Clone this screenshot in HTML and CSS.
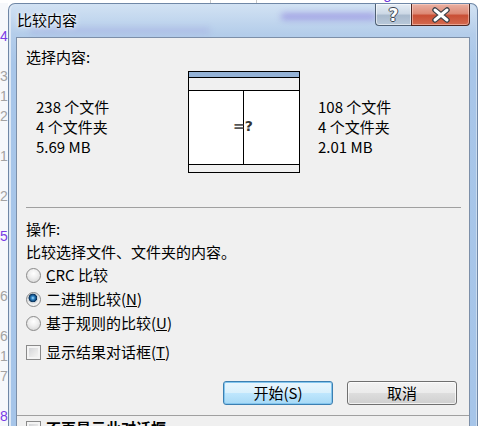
FILE: index.html
```html
<!DOCTYPE html>
<html lang="zh-CN">
<head>
    <meta charset="UTF-8">
    <title>比较内容</title>
    <link rel="stylesheet" href="styles.css">
</head>
<body>
    <div class="screen">
        <div class="topstrip">
            <span class="top-rule first"></span>
            <span class="top-rule"></span>
            <span class="top-title">■ 170027 feeling</span>
        </div>

        <div class="desk">
            <!-- editor line numbers behind the dialog -->
            <div class="gutter">
                <span class="ln mark">4</span>
                <span class="ln"></span>
                <span class="ln">3</span>
                <span class="ln">1</span>
                <span class="ln">2</span>
                <span class="ln"></span>
                <span class="ln">1</span>
                <span class="ln"></span>
                <span class="ln">2</span>
                <span class="ln"></span>
                <span class="ln mark">5</span>
                <span class="ln"></span>
                <span class="ln"></span>
                <span class="ln">6</span>
                <span class="ln"></span>
                <span class="ln">6</span>
                <span class="ln">1</span>
                <span class="ln">7</span>
                <span class="ln"></span>
                <span class="ln mark">8</span>
            </div>

            <div class="window">
                <div class="titlebar">
                    <!-- blurred stuff behind the glass -->
                    <div class="ghost ghost-one"></div>
                    <div class="ghost ghost-two"></div>
                    <span class="title">比较内容</span>
                    <div class="caption-btns">
                        <div class="cap help"><span class="help-glyph">?</span></div>
                        <div class="cap close">
                            <svg width="22" height="16" viewBox="0 0 22 16">
                                <path d="M5 3 L17 13 M17 3 L5 13" stroke="#3a3f47" stroke-width="5.5" stroke-linecap="round" fill="none"/>
                                <path d="M5 3 L17 13 M17 3 L5 13" stroke="#ffffff" stroke-width="3" stroke-linecap="round" fill="none"/>
                            </svg>
                        </div>
                    </div>
                </div>

                <div class="client">
                    <div class="label">选择内容:</div>

                    <div class="compare">
                        <div class="stats">
                            238 个文件<br>
                            4 个文件夹<br>
                            5.69 MB
                        </div>
                        <div class="diagram">
                            <div class="d-head"></div>
                            <div class="d-bar"></div>
                            <div class="d-panes">
                                <div class="pane"></div>
                                <div class="pane"></div>
                            </div>
                            <div class="d-foot"></div>
                            <span class="d-mark"><span class="eq">=</span>?</span>
                        </div>
                        <div class="stats right">
                            108 个文件<br>
                            4 个文件夹<br>
                            2.01 MB
                        </div>
                    </div>

                    <div class="sep"></div>

                    <div class="label section">操作:</div>
                    <div class="desc">比较选择文件、文件夹的内容。</div>

                    <div class="options">
                        <div class="opt"><span class="radio"></span><span><u>C</u>RC 比较</span></div>
                        <div class="opt"><span class="radio on"></span><span>二进制比较(<u>N</u>)</span></div>
                        <div class="opt"><span class="radio"></span><span>基于规则的比较(<u>U</u>)</span></div>
                        <div class="opt check-row"><span class="check"></span><span>显示结果对话框(<u>T</u>)</span></div>
                    </div>

                    <div class="actions">
                        <div class="btn default">开始(S)</div>
                        <div class="btn">取消</div>
                    </div>

                    <div class="sep wide"></div>

                    <div class="opt lower"><span class="check"></span><span class="strong">不再显示此对话框</span></div>
                </div>
            </div>
        </div>
    </div>
</body>
</html>
```

FILE: styles.css
```css
body {
    margin: 0;
    font-family: "Noto Sans CJK SC", "Noto Sans", sans-serif;
    font-size: 15px;
    line-height: 20px;
    color: #000;
    background: #fff;
}
.screen {
    width: 479px;
    height: 426px;
    overflow: hidden;
}

/* background app strip above the dialog */
.topstrip {
    height: 3px;
    overflow: hidden;
    display: flex;
    background: #fff;
}
.top-rule {
    width: 1px;
    height: 3px;
    background: #c8c8c8;
    margin-left: 45px;
}
.top-rule.first {
    margin-left: 210px;
}
.top-title {
    margin-left: 23px;
    margin-top: -14px;
    font-size: 15px;
    line-height: 16px;
    color: #6d35dc;
    font-family: "Liberation Sans", sans-serif;
}

.desk {
    display: flex;
}
.gutter {
    width: 8px;
    flex: none;
    overflow: hidden;
    padding-top: 23px;
    background: #f6f8fb;
    font-family: "Liberation Sans", sans-serif;
    font-size: 14px;
    line-height: 20px;
    color: #a3a3a3;
}
.ln {
    display: block;
    height: 20px;
}
.ln.mark {
    color: #7a3ce6;
}

/* Windows 7 style glass frame */
.window {
    width: 470px;
    flex: none;
    box-sizing: border-box;
    height: 423px;
    padding: 0 7px;
    border: 1px solid #6f87a6;
    border-bottom: none;
    border-radius: 7px 7px 0 0;
    background: linear-gradient(180deg, #d2e2f3 0, #b4cdea 30px, #a8c6e9 60px, #a6c5e9 100%);
    box-shadow: inset 2px 0 0 #dde8f5, inset -1px 0 0 #c9dbef;
    display: flex;
    flex-direction: column;
}
.titlebar {
    position: relative;
    flex: none;
    height: 33px;
    display: flex;
    justify-content: space-between;
    align-items: flex-start;
}
.ghost {
    position: absolute;
    filter: blur(3px);
    border-radius: 6px;
}
.ghost-one {
    left: 265px;
    top: 9px;
    width: 95px;
    height: 7px;
    background: rgba(120, 96, 214, 0.45);
}
.ghost-two {
    left: 14px;
    top: 24px;
    width: 180px;
    height: 5px;
    background: rgba(130, 110, 210, 0.22);
}
.title {
    position: relative;
    padding: 6px 0 0 1px;
    text-shadow: 0 0 6px #fff, 0 0 3px #fff;
}
.caption-btns {
    position: relative;
    display: flex;
}
.cap {
    height: 22px;
    box-sizing: border-box;
    display: flex;
    align-items: center;
    justify-content: center;
}
.help {
    width: 36px;
    border: 1px solid #4f6074;
    border-top: none;
    border-right: none;
    border-radius: 0 0 0 4px;
    background: linear-gradient(180deg, #e6edf5 0, #cdd9e6 45%, #a9bacd 55%, #b9c9da 100%);
    box-shadow: inset 0 0 0 1px rgba(255, 255, 255, 0.55);
}
.help-glyph {
    font-family: "DejaVu Sans", sans-serif;
    font-weight: bold;
    font-size: 17px;
    color: #fff;
    text-shadow: 1px 0 0 #3e4652, -1px 0 0 #3e4652, 0 1px 0 #3e4652, 0 -1px 0 #3e4652;
}
.close {
    width: 59px;
    border: 1px solid #4e2620;
    border-top: none;
    border-radius: 0 0 4px 0;
    background: linear-gradient(180deg, #eab0a2 0, #dd8a76 45%, #c94f35 55%, #d46a4f 100%);
    box-shadow: inset 0 0 0 1px rgba(255, 220, 210, 0.5);
}

.client {
    flex: 1;
    min-height: 0;
    overflow: hidden;
    border: 1px solid #7c8fa8;
    border-bottom: none;
    background: #f0f0f0;
    padding: 9px 12px 0 9px;
}
.label.section {
    margin-top: 11px;
}
.compare {
    display: flex;
    margin-top: 4px;
    padding-left: 10px;
}
.stats {
    width: 152px;
    margin-top: 26px;
}
.stats.right {
    width: auto;
    margin-left: 18px;
}
.diagram {
    position: relative;
    width: 112px;
    height: 102px;
    box-sizing: border-box;
    border: 1px solid #000;
    display: flex;
    flex-direction: column;
}
.d-head {
    height: 5px;
    background: #95b3d7;
    border-bottom: 1px solid #000;
}
.d-bar {
    height: 12px;
    background: #f0f0f0;
    border-bottom: 1px solid #000;
}
.d-panes {
    height: 73px;
    display: flex;
    border-bottom: 1px solid #000;
}
.pane {
    flex: 1;
    background: #fff;
}
.pane:first-child {
    flex: none;
    width: 54px;
    border-right: 1px solid #000;
}
.d-foot {
    flex: 1;
    background: #f0f0f0;
}
.d-mark {
    position: absolute;
    left: 44px;
    top: 46px;
    font-family: "DejaVu Sans", sans-serif;
    font-size: 14px;
    font-weight: bold;
    line-height: 16px;
    color: #333;
}
.d-mark .eq {
    color: #555;
}

.sep {
    margin-top: 34px;
    width: 435px;
    height: 1px;
    background: #a0a0a0;
}
.desc {
    margin-top: 3px;
}
.options {
    margin-top: 1px;
}
.opt {
    height: 24px;
    display: flex;
    align-items: center;
    gap: 5px;
}
.opt.check-row {
    margin-top: 5px;
}
.radio {
    width: 15px;
    height: 15px;
    box-sizing: border-box;
    border-radius: 50%;
    border: 1px solid #8a8a8a;
    background: radial-gradient(circle at 50% 35%, #ffffff 0, #eeeeee 45%, #cfcfcf 100%);
}
.radio.on {
    background: radial-gradient(circle at 45% 38%, #b4e4fb 0, #3a8fd0 1.5px, #135289 3px, #0b2f55 4px, #cfd4d8 4.6px, #f2f2f2 6.5px);
}
.check {
    width: 15px;
    height: 15px;
    box-sizing: border-box;
    border: 1px solid #8a8a8a;
    background: linear-gradient(135deg, #cbcdd1 0, #eaeaea 60%, #f8f8f8 100%);
    box-shadow: inset 0 0 0 2px #f4f4f4;
}

.actions {
    margin-top: 17px;
    display: flex;
    justify-content: flex-end;
    gap: 14px;
}
.btn {
    width: 110px;
    height: 24px;
    box-sizing: border-box;
    border: 1px solid #707070;
    border-radius: 3px;
    background: linear-gradient(180deg, #f3f3f3 0, #ebebeb 48%, #dddddd 52%, #cfcfcf 100%);
    box-shadow: inset 0 0 0 1px rgba(255, 255, 255, 0.7);
    display: flex;
    align-items: center;
    justify-content: center;
    line-height: 20px;
}
.btn.default {
    border-color: #3c7fb1;
    background: linear-gradient(180deg, #eaf6fd 0, #d9f0fc 48%, #bee6fd 52%, #a7d9f5 100%);
    box-shadow: inset 0 0 0 1px #84c6ee;
}

.sep.wide {
    margin-top: 10px;
    margin-left: -9px;
    width: auto;
    margin-right: -12px;
}
.opt.lower {
    margin-top: 0;
}
.strong {
    font-weight: bold;
}
```
